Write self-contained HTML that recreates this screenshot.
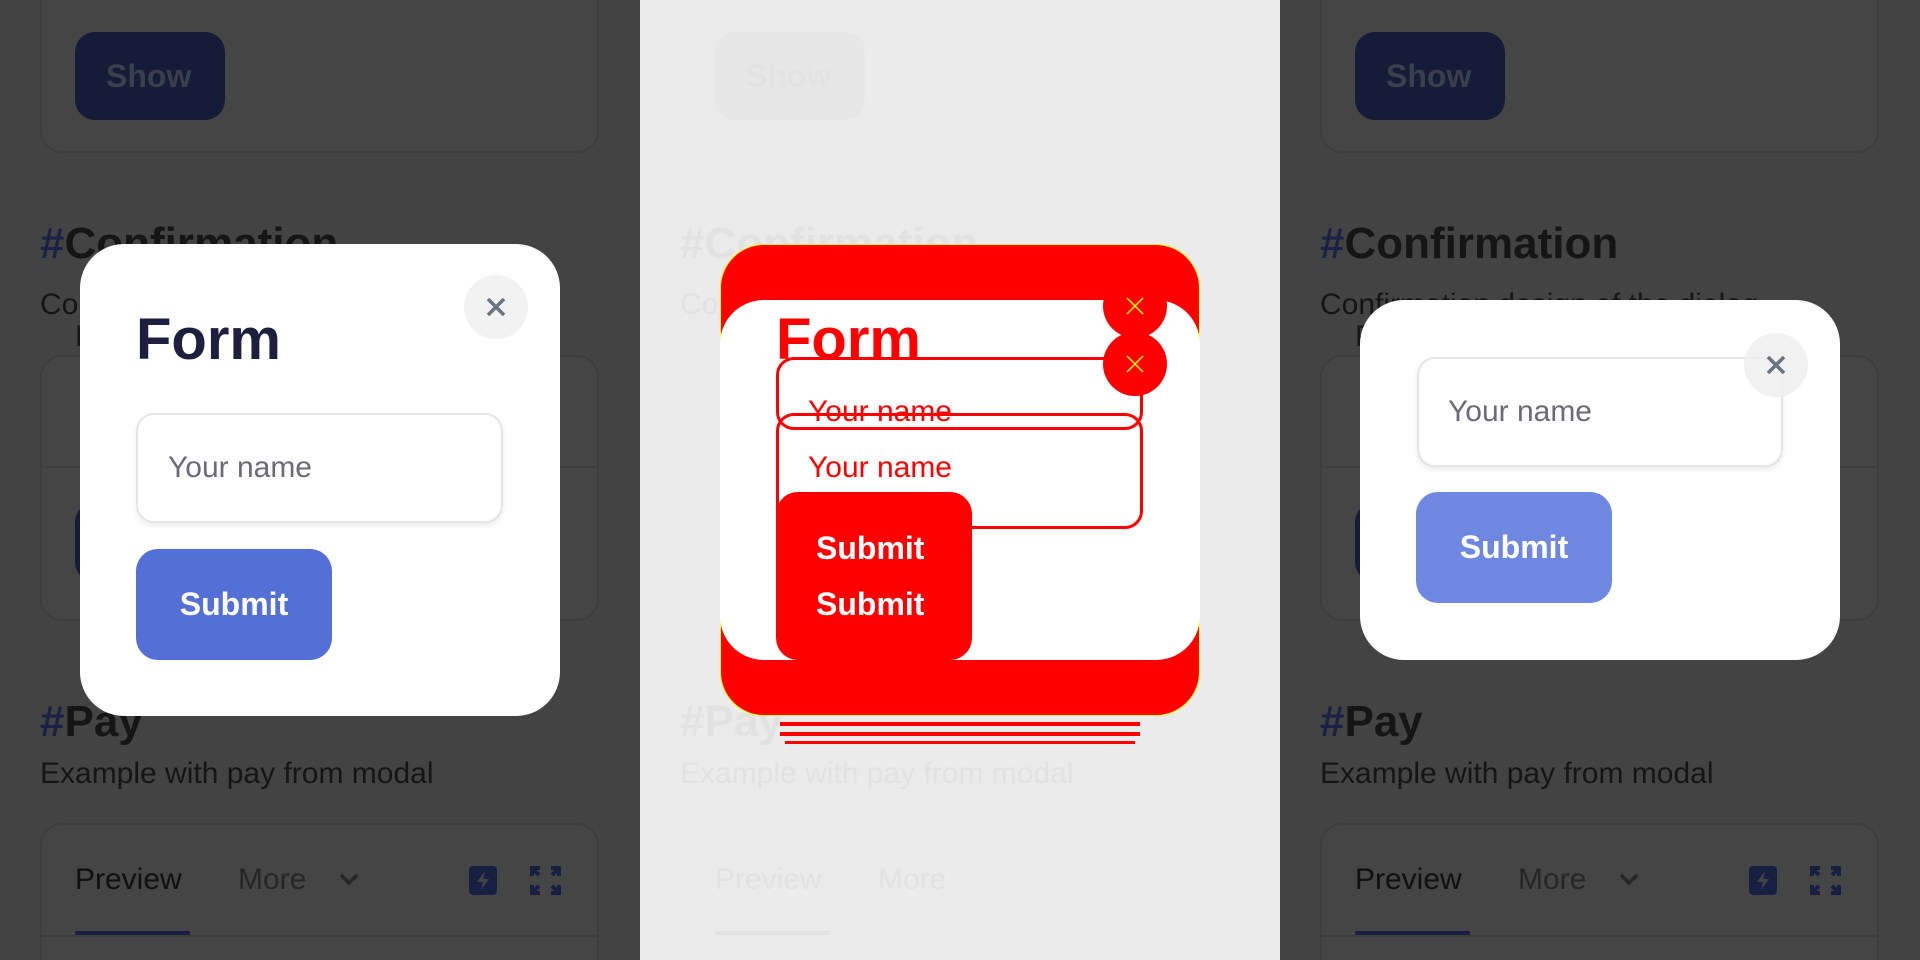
<!DOCTYPE html>
<html><head><meta charset="utf-8"><style>
*{margin:0;padding:0;box-sizing:border-box}
html,body{width:1920px;height:960px;overflow:hidden}
body{position:relative;font-family:"Liberation Sans",sans-serif}
.p{position:absolute;top:0;width:640px;height:960px;overflow:hidden}
.a{position:absolute}
.dark{background:#434343}
.card{position:absolute;left:40px;width:559px;border:2px solid #3d3d3d;border-radius:22px;background:#454545}
.t{position:absolute;white-space:nowrap;line-height:1}
.modal{position:absolute;background:#fff;border-radius:44px}
.close{position:absolute;width:64px;height:64px;border-radius:50%;background:#f2f2f2}
.inp{position:absolute;background:#fff;border:2px solid #e4e4e4;border-radius:18px;box-shadow:0 3px 6px rgba(0,0,0,.08)}
.btn{position:absolute;border-radius:22px;color:#fff;font-weight:bold;font-size:32px;display:flex;align-items:center;justify-content:center}
</style></head><body>

<!-- LEFT PANEL -->
<div class="p dark" style="left:0">
 <div class="card" style="top:-40px;height:193px"></div>
 <div class="a" style="left:75px;top:32px;width:150px;height:88px;border-radius:20px;background:#141c38"></div>
 <div class="t" style="left:106px;top:60px;font-size:32px;font-weight:bold;color:#3b3f4c">Show</div>
 <div class="t" style="left:40px;top:222px;font-size:44px;font-weight:bold;color:#151515"><span style="color:#1a2145">#</span>Confirmation</div>
 <div class="t" style="left:40px;top:290px;font-size:30px;color:#151515">Confirmation design of the dialog</div>
 <div class="card" style="top:355px;height:266px"></div>
 <div class="a" style="left:42px;top:466px;width:555px;height:2px;background:#3d3d3d"></div>
 <div class="t" style="left:75px;top:322px;font-size:30px;color:#151515">Preview</div>
 <div class="a" style="left:75px;top:502px;width:150px;height:80px;border-radius:20px;background:#141c38"></div>
 <div class="t" style="left:40px;top:700px;font-size:44px;font-weight:bold;color:#151515"><span style="color:#1a2145">#</span>Pay</div>
 <div class="t" style="left:40px;top:759px;font-size:30px;color:#151515">Example with pay from modal</div>
 <div class="card" style="top:823px;height:137px;border-bottom:none;border-radius:22px 22px 0 0"></div>
 <div class="t" style="left:75px;top:865px;font-size:30px;color:#101010">Preview</div>
 <div class="t" style="left:238px;top:865px;font-size:30px;color:#262626">More</div>
 <svg class="a" style="left:338px;top:868px" width="22" height="22" viewBox="0 0 22 22"><path d="M3 7l8 8 8-8" stroke="#262626" stroke-width="3.5" fill="none"/></svg>
 <div class="a" style="left:75px;top:931px;width:115px;height:5px;background:#172042"></div>
 <div class="a" style="left:42px;top:935px;width:555px;height:2px;background:#3d3d3d"></div>
 <svg class="a" style="left:469px;top:866px" width="28" height="29" viewBox="0 0 28 29"><rect width="28" height="29" rx="4" fill="#172042"/><path d="M16 5l-8 11h6l-2 8 8-11h-6z" fill="#444"/></svg>
 <svg class="a" style="left:530px;top:866px" width="31" height="29" viewBox="0 0 31 29" fill="none" stroke="#172042" stroke-width="4"><path d="M2 10V2h8M2 2l7 7M29 10V2h-8M29 2l-7 7M2 19v8h8M2 27l7-7M29 19v8h-8M29 27l-7-7"/></svg>
 <div class="modal" style="left:80px;top:244px;width:480px;height:472px">
  <div class="close" style="left:384px;top:31px"></div>
  <svg class="a" style="left:405px;top:52px" width="22" height="22"><path d="M3 3l16 16M19 3L3 19" stroke="#6b7280" stroke-width="3.5"/></svg>
  <div class="t" style="left:56px;top:67px;font-size:58px;font-weight:bold;color:#1c1f3d">Form</div>
  <div class="inp" style="left:56px;top:169px;width:367px;height:110px"></div>
  <div class="t" style="left:88px;top:209px;font-size:30px;color:#6b6b78">Your name</div>
  <div class="btn" style="left:56px;top:305px;width:196px;height:111px;background:#5470d6">Submit</div>
 </div>
</div>

<!-- MIDDLE PANEL -->
<div class="p" style="left:640px;background:#ebebeb">
 <div class="a" style="left:75px;top:32px;width:150px;height:88px;border-radius:20px;background:#e7e7e7"></div>
 <div class="t" style="left:106px;top:60px;font-size:32px;font-weight:bold;color:#e3e3e3">Show</div>
 <div class="t" style="left:40px;top:222px;font-size:44px;font-weight:bold;color:#e2e2e2">#Confirmation</div>
 <div class="t" style="left:40px;top:290px;font-size:30px;color:#e2e2e2">Confirmation design of the dialog</div>
 <div class="t" style="left:40px;top:700px;font-size:44px;font-weight:bold;color:#e2e2e2">#Pay</div>
 <div class="t" style="left:40px;top:759px;font-size:30px;color:#e2e2e2">Example with pay from modal</div>
 <div class="t" style="left:75px;top:865px;font-size:30px;color:#e2e2e2">Preview</div>
 <div class="t" style="left:238px;top:865px;font-size:30px;color:#e2e2e2">More</div>
 <div class="a" style="left:75px;top:931px;width:115px;height:4px;background:#e2e2e2"></div>
 <div class="a" style="left:80px;top:244px;width:480px;height:472px;background:#f00;border-radius:44px;border:1px solid #ff0"></div>
 <div class="a" style="left:80px;top:300px;width:480px;height:360px;background:#fff;border-radius:44px"></div>
 <div class="a" style="left:140px;top:722px;width:360px;height:4px;background:#f00"></div>
 <div class="a" style="left:140px;top:732px;width:360px;height:4px;background:#f00"></div>
 <div class="a" style="left:145px;top:741px;width:350px;height:3px;background:#f00"></div>
 <div class="t" style="left:136px;top:311px;font-size:58px;font-weight:bold;color:#f00">Form</div>
 <div class="a" style="left:136px;top:357px;width:367px;height:73px;border:3px solid #f00;border-radius:18px"></div>
 <div class="a" style="left:136px;top:413px;width:367px;height:116px;border:3px solid #f00;border-radius:18px"></div>
 <div class="t" style="left:168px;top:397px;font-size:30px;color:#f00">Your name</div>
 <div class="t" style="left:168px;top:453px;font-size:30px;color:#f00">Your name</div>
 <div class="a" style="left:136px;top:492px;width:196px;height:168px;background:#f00;border-radius:22px"></div>
 <div class="t" style="left:176px;top:532px;font-size:32px;font-weight:bold;color:#fff">Submit</div>
 <div class="t" style="left:176px;top:588px;font-size:32px;font-weight:bold;color:#fff">Submit</div>
 <div class="a" style="left:463px;top:274px;width:64px;height:64px;border-radius:50%;background:#f00"></div>
 <div class="a" style="left:463px;top:332px;width:64px;height:64px;border-radius:50%;background:#f00"></div>
 <svg class="a" style="left:484px;top:295px" width="22" height="80"><path d="M3 3l16 16M19 3L3 19M3 61l16 16M19 61L3 77" stroke="#ff0" stroke-width="1.5"/></svg>
</div>

<!-- RIGHT PANEL -->
<div class="p dark" style="left:1280px">
 <div class="card" style="top:-40px;height:193px"></div>
 <div class="a" style="left:75px;top:32px;width:150px;height:88px;border-radius:20px;background:#141c38"></div>
 <div class="t" style="left:106px;top:60px;font-size:32px;font-weight:bold;color:#3b3f4c">Show</div>
 <div class="t" style="left:40px;top:222px;font-size:44px;font-weight:bold;color:#151515"><span style="color:#1a2145">#</span>Confirmation</div>
 <div class="t" style="left:40px;top:290px;font-size:30px;color:#151515">Confirmation design of the dialog</div>
 <div class="card" style="top:355px;height:266px"></div>
 <div class="a" style="left:42px;top:466px;width:555px;height:2px;background:#3d3d3d"></div>
 <div class="t" style="left:75px;top:322px;font-size:30px;color:#151515">Preview</div>
 <div class="a" style="left:75px;top:502px;width:150px;height:80px;border-radius:20px;background:#141c38"></div>
 <div class="t" style="left:40px;top:700px;font-size:44px;font-weight:bold;color:#151515"><span style="color:#1a2145">#</span>Pay</div>
 <div class="t" style="left:40px;top:759px;font-size:30px;color:#151515">Example with pay from modal</div>
 <div class="card" style="top:823px;height:137px;border-bottom:none;border-radius:22px 22px 0 0"></div>
 <div class="t" style="left:75px;top:865px;font-size:30px;color:#101010">Preview</div>
 <div class="t" style="left:238px;top:865px;font-size:30px;color:#262626">More</div>
 <svg class="a" style="left:338px;top:868px" width="22" height="22" viewBox="0 0 22 22"><path d="M3 7l8 8 8-8" stroke="#262626" stroke-width="3.5" fill="none"/></svg>
 <div class="a" style="left:75px;top:931px;width:115px;height:5px;background:#172042"></div>
 <div class="a" style="left:42px;top:935px;width:555px;height:2px;background:#3d3d3d"></div>
 <svg class="a" style="left:469px;top:866px" width="28" height="29" viewBox="0 0 28 29"><rect width="28" height="29" rx="4" fill="#172042"/><path d="M16 5l-8 11h6l-2 8 8-11h-6z" fill="#444"/></svg>
 <svg class="a" style="left:530px;top:866px" width="31" height="29" viewBox="0 0 31 29" fill="none" stroke="#172042" stroke-width="4"><path d="M2 10V2h8M2 2l7 7M29 10V2h-8M29 2l-7 7M2 19v8h8M2 27l7-7M29 19v8h-8M29 27l-7-7"/></svg>
 <div class="modal" style="left:80px;top:300px;width:480px;height:360px">
  <div class="inp" style="left:57px;top:57px;width:366px;height:110px"></div>
  <div class="t" style="left:88px;top:97px;font-size:30px;color:#6b6b78">Your name</div>
  <div class="close" style="left:384px;top:33px;background:rgba(238,238,238,.85)"></div>
  <svg class="a" style="left:405px;top:54px" width="22" height="22"><path d="M3 3l16 16M19 3L3 19" stroke="#6b7280" stroke-width="3.5"/></svg>
  <div class="btn" style="left:56px;top:192px;width:196px;height:111px;background:#6e87e1">Submit</div>
 </div>
</div>
</body></html>
